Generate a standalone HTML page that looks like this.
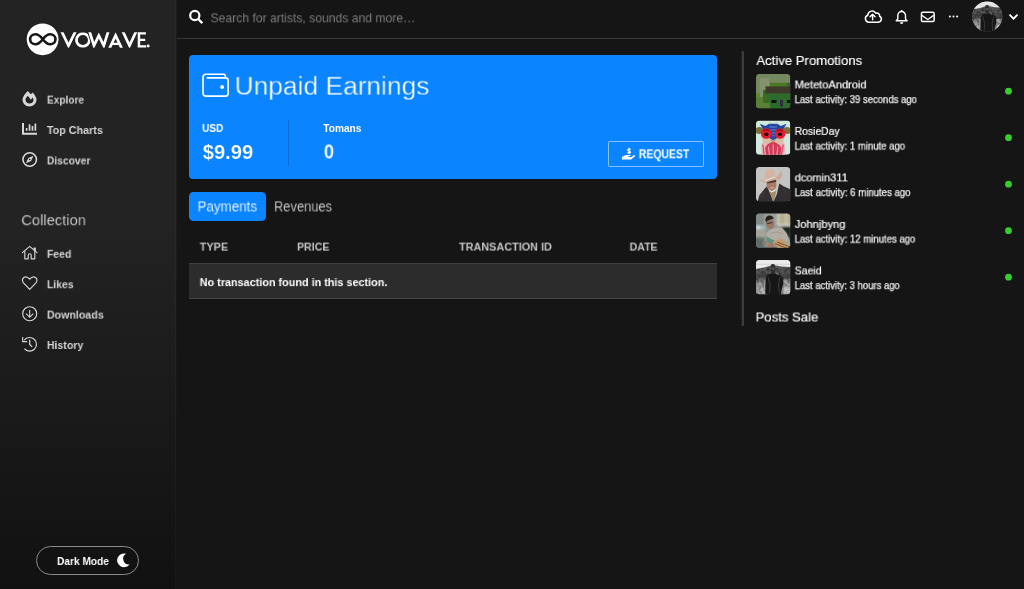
<!DOCTYPE html>
<html>
<head>
<meta charset="utf-8">
<title>Vowave</title>
<style>
*{box-sizing:border-box;margin:0;padding:0}
html,body{width:1024px;height:589px;overflow:hidden;background:#151515;font-family:"Liberation Sans",sans-serif;color:#fff}
.abs{position:absolute}
#side{position:absolute;left:0;top:0;width:176px;height:589px;background:linear-gradient(180deg,#232323 0%,#232323 38%,#111111 100%);border-right:1px solid rgba(255,255,255,.03)}
#side2{position:absolute;left:176px;top:0;width:1px;height:589px;background:linear-gradient(180deg,#232323 0%,#232323 38%,#111111 100%);opacity:.5}
#main{position:absolute;left:177px;top:0;width:847px;height:589px;background:#151515}
.t{position:absolute;white-space:nowrap;line-height:1;transform-origin:0 0;will-change:transform}
svg{position:absolute;overflow:visible}
</style>
</head>
<body>
<div id="side"></div>
<div id="main"></div>
<div id="side2"></div>
<!-- top bar border -->
<div class="abs" style="left:177px;top:38px;width:847px;height:1px;background:#383838"></div>
<!-- blue card -->
<div class="abs" style="left:189.1px;top:54.65px;width:527.6px;height:124.4px;background:#0a84ff;border-radius:4px"></div>
<div class="abs" style="left:287.5px;top:120px;width:1px;height:46px;background:#086ed6"></div>
<!-- request button -->
<div class="abs" style="left:608px;top:141px;width:96px;height:25.5px;border:1px solid rgba(255,255,255,.5);border-radius:1.5px"></div>
<!-- tab -->
<div class="abs" style="left:189.2px;top:191.65px;width:76.8px;height:29.15px;background:#0a84ff;border-radius:4.5px"></div>
<!-- table row -->
<div class="abs" style="left:189px;top:263px;width:528px;height:36px;background:#2c2c2c;border-top:1px solid #414141;border-bottom:1px solid #444"></div>
<!-- right panel border -->
<div class="abs" style="left:742px;top:50.5px;width:2px;height:275.3px;background:#3b3b3b"></div>
<div class="abs" style="left:741px;top:50.5px;width:1px;height:275.3px;background:#202020"></div>
<!-- dark mode pill -->
<div class="abs" style="left:36px;top:546px;width:103px;height:29px;border:1px solid #8a8a8a;border-radius:15px"></div>

<!-- TEXT -->
<div class="t" style="left:210px;top:11px;font-size:13.5px;font-weight:400;color:#7d7d7d;transform:translate(0.50px,0.30px) scale(0.9010,1.0000);">Search for artists, sounds and more…</div>
<div class="t" style="left:234px;top:72px;font-size:26.6px;font-weight:400;color:#fff;transform:translate(0.52px,0.80px) scale(0.9916,1.0000);-webkit-text-stroke:0.35px #0a84ff;">Unpaid Earnings</div>
<div class="t" style="left:202px;top:123px;font-size:10px;font-weight:700;color:#fff;transform:translate(0.20px,0.90px) scale(0.9956,1.0000);">USD</div>
<div class="t" style="left:202px;top:141px;font-size:20px;font-weight:700;color:#fff;transform:translate(0.70px,0.50px) scale(1.0075,1.0000);-webkit-text-stroke:0.2px #0a84ff;">$9.99</div>
<div class="t" style="left:323px;top:123px;font-size:10px;font-weight:700;color:#fff;transform:translate(0.30px,0.90px) scale(1.0148,1.0000);">Tomans</div>
<div class="t" style="left:323px;top:141px;font-size:20px;font-weight:700;color:#fff;transform:translate(0.80px,0.50px) scale(0.9273,1.0000);-webkit-text-stroke:0.2px #0a84ff;">0</div>
<div class="t" style="left:638px;top:148px;font-size:12px;font-weight:700;color:#fff;transform:translate(0.80px,0.30px) scale(0.8692,1.0000);">REQUEST</div>
<div class="t" style="left:197px;top:199px;font-size:14px;font-weight:400;color:#fff;transform:translate(0.54px,0.40px) scale(0.9568,1.0000);-webkit-text-stroke:0.15px #0a84ff;">Payments</div>
<div class="t" style="left:273px;top:199px;font-size:14px;font-weight:400;color:#d6d6d6;transform:translate(0.98px,0.40px) scale(0.9204,1.0000);-webkit-text-stroke:0.15px #151515;">Revenues</div>
<div class="t" style="left:199px;top:241px;font-size:11.8px;font-weight:700;color:#c6c6c6;transform:translate(0.70px,0.60px) scale(0.9211,1.0000);">TYPE</div>
<div class="t" style="left:297px;top:241px;font-size:11.8px;font-weight:700;color:#c6c6c6;transform:translate(0.00px,0.60px) scale(0.8982,1.0000);">PRICE</div>
<div class="t" style="left:459px;top:241px;font-size:11.8px;font-weight:700;color:#c6c6c6;transform:translate(0.00px,0.60px) scale(0.9191,1.0000);">TRANSACTION ID</div>
<div class="t" style="left:629px;top:241px;font-size:11.8px;font-weight:700;color:#c6c6c6;transform:translate(0.60px,0.60px) scale(0.8958,1.0000);">DATE</div>
<div class="t" style="left:199px;top:277px;font-size:11.8px;font-weight:700;color:#fff;transform:translate(0.70px,0.10px) scale(0.9177,1.0000);">No transaction found in this section.</div>
<div class="t" style="left:756px;top:54px;font-size:13.6px;font-weight:400;color:#fff;transform:translate(0.40px,0.00px) scale(0.9649,1.0000);-webkit-text-stroke:0.15px #fff;">Active Promotions</div>
<div class="t" style="left:794px;top:79px;font-size:11.2px;font-weight:400;color:#fff;transform:translate(0.70px,0.40px) scale(0.9870,1.0000);-webkit-text-stroke:0.2px #fff;">MetetoAndroid</div>
<div class="t" style="left:794px;top:95px;font-size:10px;font-weight:400;color:#f0f0f0;transform:translate(0.70px,0.10px) scale(0.9515,1.0000);-webkit-text-stroke:0.25px #f0f0f0;">Last activity: 39 seconds ago</div>
<div class="t" style="left:794px;top:125px;font-size:11.2px;font-weight:400;color:#fff;transform:translate(0.70px,0.90px) scale(0.9243,1.0000);-webkit-text-stroke:0.2px #fff;">RosieDay</div>
<div class="t" style="left:794px;top:141px;font-size:10px;font-weight:400;color:#f0f0f0;transform:translate(0.70px,0.60px) scale(0.9547,1.0000);-webkit-text-stroke:0.25px #f0f0f0;">Last activity: 1 minute ago</div>
<div class="t" style="left:794px;top:172px;font-size:11.2px;font-weight:400;color:#fff;transform:translate(0.70px,0.40px) scale(0.9855,1.0000);-webkit-text-stroke:0.2px #fff;">dcomin311</div>
<div class="t" style="left:794px;top:188px;font-size:10px;font-weight:400;color:#f0f0f0;transform:translate(0.70px,0.10px) scale(0.9599,1.0000);-webkit-text-stroke:0.25px #f0f0f0;">Last activity: 6 minutes ago</div>
<div class="t" style="left:794px;top:218px;font-size:11.2px;font-weight:400;color:#fff;transform:translate(0.70px,0.90px) scale(0.9944,1.0000);-webkit-text-stroke:0.2px #fff;">Johnjbyng</div>
<div class="t" style="left:794px;top:234px;font-size:10px;font-weight:400;color:#f0f0f0;transform:translate(0.70px,0.60px) scale(0.9564,1.0000);-webkit-text-stroke:0.25px #f0f0f0;">Last activity: 12 minutes ago</div>
<div class="t" style="left:794px;top:265px;font-size:11.2px;font-weight:400;color:#fff;transform:translate(0.70px,0.40px) scale(0.9369,1.0000);-webkit-text-stroke:0.2px #fff;">Saeid</div>
<div class="t" style="left:794px;top:281px;font-size:10px;font-weight:400;color:#f0f0f0;transform:translate(0.70px,0.10px) scale(0.9500,1.0000);-webkit-text-stroke:0.25px #f0f0f0;">Last activity: 3 hours ago</div>
<div class="t" style="left:755px;top:310px;font-size:13.6px;font-weight:400;color:#fff;transform:translate(0.54px,0.50px) scale(0.9650,1.0000);-webkit-text-stroke:0.15px #fff;">Posts Sale</div>
<div class="t" style="left:46px;top:93px;font-size:11.6px;font-weight:700;color:#d4d4d4;transform:translate(0.90px,0.60px) scale(0.8752,1.0000);">Explore</div>
<div class="t" style="left:46px;top:124px;font-size:11.6px;font-weight:700;color:#d4d4d4;transform:translate(0.90px,0.00px) scale(0.9268,1.0000);">Top Charts</div>
<div class="t" style="left:46px;top:154px;font-size:11.6px;font-weight:700;color:#d4d4d4;transform:translate(0.90px,0.40px) scale(0.8875,1.0000);">Discover</div>
<div class="t" style="left:21px;top:212px;font-size:15.4px;font-weight:400;color:#dadada;transform:translate(0.30px,0.20px) scale(0.9564,1.0000);-webkit-text-stroke:0.2px #1e1e1e;">Collection</div>
<div class="t" style="left:46px;top:247px;font-size:11.6px;font-weight:700;color:#d4d4d4;transform:translate(0.90px,0.80px) scale(0.9045,1.0000);">Feed</div>
<div class="t" style="left:46px;top:278px;font-size:11.6px;font-weight:700;color:#d4d4d4;transform:translate(0.90px,0.20px) scale(0.9007,1.0000);">Likes</div>
<div class="t" style="left:46px;top:308px;font-size:11.6px;font-weight:700;color:#d4d4d4;transform:translate(0.90px,0.60px) scale(0.9188,1.0000);">Downloads</div>
<div class="t" style="left:46px;top:339px;font-size:11.6px;font-weight:700;color:#d4d4d4;transform:translate(0.90px,0.00px) scale(0.9112,1.0000);">History</div>
<div class="t" style="left:57px;top:556px;font-size:11.8px;font-weight:700;color:#fff;transform:translate(0.00px,0.00px) scale(0.8609,1.0000);">Dark Mode</div>
<!-- ICONS -->
<svg width="1024" height="589" viewBox="0 0 1024 589" style="left:0;top:0" fill="none">
<!-- logo -->
<circle cx="42.6" cy="39.3" r="15.9" fill="#fff"/>
<path d="M42.800 39.200C40.300 35.900 38.300 34.200 35.500 34.200A5.400 5 0 0 0 35.500 44.200C38.300 44.200 40.300 42.500 42.800 39.200C45.300 35.900 47.300 34.200 50.100 34.200A5.400 5 0 0 1 50.100 44.200C47.300 44.200 45.300 42.500 42.800 39.200Z" stroke="#161616" stroke-width="2.600"/>
<clipPath id="capclip"><rect x="58" y="32.3" width="95" height="15.4"/></clipPath>
<g clip-path="url(#capclip)" stroke="#fff" stroke-width="2.7" stroke-linejoin="miter" stroke-miterlimit="10">
<path d="M61.1 30.3L68.5 45.6L76 30.3"/>
<circle cx="82.9" cy="40" r="6.45"/>
<path d="M87.2 30.3L92.3 45.6" stroke="#242424" stroke-width="1.1"/>
<path d="M89.1 30.3L94 45.6L98.800 35.600L103.800 45.600L108.600 30.300"/>
<path d="M109.050 49.400L115.600 35.500L122.150 49.400"/>
<path d="M112 43.900H119.200" stroke-width="2.200"/>
<path d="M122.300 30.300L129.500 45.600L136.700 30.300"/>
</g>
<path d="M137.700 32.300h8.200v2.300h-5.700v4.200h5v2.200h-5v4.200h6.100v2.300h-8.600z" fill="#fff"/>
<circle cx="148.200" cy="46" r="1.400" fill="#fff"/>

<!-- search -->
<circle cx="194.800" cy="15.500" r="4.600" stroke="#fff" stroke-width="2.200"/>
<path d="M198.200 19L202.300 23.100" stroke="#fff" stroke-width="2.400"/>

<!-- explore (fire) -->
<g transform="translate(22.500 91) scale(0.03125 0.0303)">
<path fill="#d8d8d8" fill-rule="evenodd" d="M323.560 51.200c-20.800 19.300-39.580 39.590-56.220 59.970C240.080 73.620 206.280 35.530 168 0 69.740 91.170 0 209.960 0 281.600 0 408.850 100.290 512 224 512s224-103.150 224-230.400c0-53.270-51.980-163.140-124.440-230.400zm-19.470 340.650C282.430 407.010 255.720 416 226.860 416 154.710 416 96 368.260 96 290.750c0-38.610 24.310-72.630 72.790-130.750 6.930 7.980 98.830 125.340 98.830 125.340l58.630-66.880c4.140 6.850 7.910 13.550 11.270 19.970 27.350 52.190 15.810 118.970-33.430 153.420z"/>
</g>

<!-- top charts -->
<g fill="#d8d8d8">
<path d="M22 123.100h2v9.700h13v2H22z"/>
<rect x="25.800" y="127.900" width="1.700" height="2.900" rx=".3"/>
<rect x="28.700" y="124.300" width="1.700" height="6.500" rx=".3"/>
<rect x="31.600" y="125.900" width="1.700" height="4.900" rx=".3"/>
<rect x="34.500" y="123.500" width="1.700" height="7.300" rx=".3"/>
</g>

<!-- discover (compass) -->
<circle cx="29.700" cy="159.500" r="6.750" stroke="#d8d8d8" stroke-width="1.600"/>
<path d="M33.500 155.700L31.100 160.900L25.900 163.300L28.300 158.100z" fill="#d8d8d8"/>
<circle cx="29.700" cy="159.500" r=".8" fill="#222"/>

<!-- feed (home) -->
<g stroke="#d4d4d4" stroke-width="1.150" stroke-linecap="round" stroke-linejoin="round">
<path d="M22.400 252.600L29.700 246.400L37 252.600"/>
<path d="M35.300 250.800V248h-1.200v1.800"/>
<path d="M24.800 251.200V258.800H28.200V255.200a1.500 1.500 0 0 1 3 0V258.800H34.800V251.200"/>
</g>

<!-- likes (heart) -->
<path d="M29.700 289.300L23.700 283.200C21.900 281.300 22.100 278.700 23.800 277.500C25.500 276.300 27.700 276.700 29.700 279.100C31.700 276.700 33.900 276.300 35.600 277.500C37.300 278.700 37.500 281.300 35.700 283.200Z" stroke="#d4d4d4" stroke-width="1.200" stroke-linejoin="round"/>

<!-- downloads -->
<circle cx="29.700" cy="313.700" r="7" stroke="#d4d4d4" stroke-width="1.150"/>
<path d="M29.700 310V317.200M26.100 313.700L29.700 317.300L33.300 313.700" stroke="#d4d4d4" stroke-width="1.150"/>

<!-- history -->
<g stroke="#d4d4d4" stroke-width="1.150">
<path d="M24.300 340.100A6.800 6.800 0 1 1 24.400 348.600"/>
<path d="M22.650 337V341.550H27.200"/>
<path d="M29.700 339.800V344.400L32.200 346.900" stroke-width="1.300"/>
</g>

<!-- moon -->
<path d="M126.200 553.800A6.900 6.900 0 1 0 129.500 564.500A5.700 5.700 0 0 1 126.200 553.800Z" fill="#fff"/>

<!-- wallet -->
<g stroke="#fff" stroke-width="1.600" stroke-linecap="round">
<path d="M207.300 77.900H225.600a2.500 2.500 0 0 1 2.500 2.500V93.400a2.700 2.700 0 0 1 -2.700 2.700H206.200a3.200 3.200 0 0 1 -3.200 -3.200V77.400a3.200 3.200 0 0 1 3.200 -3.200H223.400a2 2 0 0 1 2 2V77.800"/>
</g>
<circle cx="222.100" cy="87" r="1.900" fill="#fff"/>

<!-- request icon (hand holding usd) -->
<path d="M621.900 157L624.200 155.800 625.800 155.100H630.200L630.900 156.100 628.200 156.300V157.100L631.100 157.300 634 155.100 635.200 155.500 635 156.300 631.100 159.500H621.900Z" fill="#fff"/>
<path d="M630.600 149.500C629.700 148.700 627.800 148.800 627.700 150C627.600 151.300 630.700 150.700 630.500 152.200C630.400 153.200 628.500 153.300 627.500 152.500M629.100 147.800V154" stroke="#fff" stroke-width="1.200"/>

<!-- cloud upload -->
<g stroke="#fff" stroke-width="1.500" stroke-linejoin="round" stroke-linecap="round">
<path d="M869 22.200H878.400a3.100 3.100 0 0 0 1.200 -5.900a2.700 2.700 0 0 0 -3.700 -3a4.300 4.300 0 0 0 -8.100 1.900a3.600 3.600 0 0 0 1.200 7z"/>
<path d="M872.600 19.700V14.500M870.100 16.700L872.600 14.200L875.100 16.700" stroke-width="1.400"/>
</g>

<!-- bell -->
<g stroke="#fff" stroke-width="1.400" stroke-linejoin="round">
<path d="M896.200 20.700L897.800 19V15.600a3.850 4.100 0 0 1 7.700 0V19L907.100 20.700Z"/>
<path d="M901.650 11.500V10" stroke-width="1.600"/>
</g>
<path d="M899.900 22.300H903.400A1.750 1.750 0 0 1 899.900 22.300Z" fill="#fff"/>

<!-- envelope -->
<rect x="921.450" y="12.350" width="12.700" height="9.100" rx="1.300" stroke="#fff" stroke-width="1.500"/>
<path d="M921.800 15.200L927.800 19.500L933.800 15.200" stroke="#fff" stroke-width="1.400"/>

<!-- dots -->
<circle cx="949.900" cy="16.600" r="1" fill="#fff"/><circle cx="953.500" cy="16.600" r="1" fill="#fff"/><circle cx="957.100" cy="16.600" r="1" fill="#fff"/>

<!-- chevron -->
<path d="M1009.500 14.700L1013.500 18.700L1017.500 14.700" stroke="#fff" stroke-width="1.800"/>

<!-- green dots -->
<g fill="#38cc30">
<circle cx="1008.500" cy="91.200" r="3.400"/><circle cx="1008.500" cy="137.700" r="3.400"/><circle cx="1008.500" cy="184.200" r="3.400"/><circle cx="1008.500" cy="230.700" r="3.400"/><circle cx="1008.500" cy="277.200" r="3.400"/>
</g>
</svg>

<!-- AVATARS -->
<svg width="1024" height="589" viewBox="0 0 1024 589" style="left:0;top:0">
<defs>
<filter id="b5" x="-10%" y="-10%" width="120%" height="120%"><feGaussianBlur stdDeviation=".55"/></filter>
<filter id="b8" x="-10%" y="-10%" width="120%" height="120%"><feGaussianBlur stdDeviation=".8"/></filter>
<filter id="nz" x="0" y="0" width="100%" height="100%"><feTurbulence type="fractalNoise" baseFrequency=".35" numOctaves="2" seed="4" result="n"/><feColorMatrix in="n" type="matrix" values="0 0 0 0 0  0 0 0 0 0  0 0 0 0 0  2.2 0 0 0 -.8"/></filter>
<clipPath id="rr"><rect x="0" y="0" width="34.300" height="34.300" rx="3.600"/></clipPath>
<clipPath id="cc"><circle cx="17" cy="17" r="17"/></clipPath>
<!-- B/W man photo, 34x34 -->
</defs>

<!-- header avatar -->
<g transform="translate(972.150 1.400) scale(.888)"><g clip-path="url(#cc)"><g>
<rect width="34.300" height="34.300" fill="#707070"/>
<g filter="url(#b8)">
<path d="M-2 15L12 12.500 24 12 37 14V23L-2 23Z" fill="#4a4a4a"/>
<path d="M-2 9.200L8 7.600 14 5.800 20 5.600 26 6.600 37 7.200V14L24 12 12 12.500 -2 15Z" fill="#565656"/>
<path d="M-2 21L8 19 12 23 10 36H-2Z" fill="#8f8f8f"/>
<path d="M37 19L27 20 25 28 24 36H37Z" fill="#a6a6a6"/>
<path d="M-2 27L7 24 11 30 12 36H-2Z" fill="#b8b8b8"/>
<path d="M37 25L29 26 27 36H37Z" fill="#cfcfcf"/>
</g>
<rect y="7" width="34.300" height="27.300" filter="url(#nz)" opacity=".42"/>
<g filter="url(#b5)">
<path d="M-2 -2H37V7.200L26 6.600 20 5.600 14 5.800 8 7.600 -2 9.200Z" fill="#e9e9e9"/>
<path d="M-2 4.300H37" stroke="#d2d2d2" stroke-width="1"/>
</g>
<g filter="url(#b5)">
<path d="M9.300 36L9.500 24 10 17.500 12 14.800 15 13.600 19 13.600 23.600 15 26.600 17.500 27.300 24 25.500 30 24.800 36Z" fill="#151515"/>
<path d="M14.600 5.900a2.300 1.900 0 0 1 4.600 0L19.300 9.500 18.700 12.300 17.500 14.200 15.800 13.800 14.600 11Z" fill="#2e2e2e"/>
<path d="M15.400 7.600H18.600V9.600H15.400Z" fill="#555"/>
<path d="M12 17L14.200 25 13.500 33" stroke="#3d3d3d" stroke-width="1" fill="none"/>
<path d="M24 17L22.500 25 23.300 33" stroke="#3d3d3d" stroke-width="1" fill="none"/>
<path d="M19.600 12.600L22.500 14.800" stroke="#777" stroke-width="1.100"/>
</g></g></g></g>

<!-- 1 MetetoAndroid -->
<g transform="translate(756 74)"><g clip-path="url(#rr)">
<rect width="34.300" height="34.300" fill="#74875f"/>
<g filter="url(#b5)">
<rect x="3.500" y="4" width="9.500" height="19" fill="#82936d"/>
<rect x="-1" y="19" width="5" height="7" fill="#5f8a30"/>
<rect x="-1" y="23" width="16" height="13" fill="#5a8035"/>
<rect x="7" y="16" width="8" height="13" fill="#3b6a28"/>
</g>
<rect x="14" y="8.800" width="17" height="4" fill="#4a7a1f"/>
<rect x="31" y="8.800" width="4" height="4" fill="#3d5a4a"/>
<rect x="14" y="19" width="21" height="16" fill="#2c6b2c"/>
<rect x="9.500" y="12.400" width="26" height="7" fill="#40392a"/>
<rect x="15.500" y="26" width="5" height="3" fill="#0d0f0a"/>
<rect x="31" y="26" width="4" height="3" fill="#0d0f0a"/>
<rect x="24" y="26" width="3" height="6.500" fill="#332a45"/>
</g></g>

<!-- 2 RosieDay -->
<g transform="translate(756 120.500)"><g clip-path="url(#rr)">
<rect width="34.300" height="34.300" fill="#d2e9de"/>
<g filter="url(#b5)">
<path d="M5.500 36L5.200 24 8 19 12 22 17.150 19 22.300 22 26.300 19 29.100 24 28.800 36Z" fill="#e9b9bf"/>
<path d="M10 36L9 27 12 23 17.150 21 22.300 23 25.300 27 24.300 36Z" fill="#d63a58"/>
<path d="M7 24L8 35M25.300 35L27.300 24" stroke="#d9506a" stroke-width="1.400" fill="none"/>
<path d="M12.500 26L13.500 35M17.150 24V35M21.800 26L20.800 35" stroke="#f0c5cc" stroke-width=".8" fill="none"/>
<path d="M4.500 14H29.800L27 21.500 22.500 24 17.150 19.500 11.800 24 7.300 21.500Z" fill="#d8bea6"/>
<path d="M14 19L17.150 22.500 20.300 19Z" fill="#b89a80"/>
<ellipse cx="3.300" cy="10" rx="3.800" ry="3.600" fill="#7c7034"/>
<ellipse cx="31" cy="10" rx="3.800" ry="3.600" fill="#7c7034"/>
<path d="M3.800 3.300L9.500 5.500 13 3.200H21.300L24.800 5.500 30.500 3.300 27.300 9 22.300 12 20.800 17.800 17.150 19.500 13.500 17.800 12 12 7 9Z" fill="#2446a0"/>
<path d="M13.500 6.500H20.800M14.500 9.500H19.800M15.300 12.500H19M15.800 15.300H18.500" stroke="#6a8fdc" stroke-width=".9"/>
<circle cx="10.300" cy="13" r="5.300" fill="#e01a2d"/>
<circle cx="24" cy="13" r="5.300" fill="#e01a2d"/>
<ellipse cx="10.300" cy="13.800" rx="2" ry="1.700" fill="#16040a"/>
<ellipse cx="24" cy="13.800" rx="2" ry="1.700" fill="#16040a"/>
<path d="M7.300 10.300Q10.300 8 13.300 10.300M21 10.300Q24 8 27 10.300" stroke="#7a0a16" stroke-width="1" fill="none"/>
<path d="M14 1.500V4M20.300 1.500V4" stroke="#9fc0a8" stroke-width=".8"/>
</g>
</g></g>

<!-- 3 dcomin311 -->
<g transform="translate(756 167)"><g clip-path="url(#rr)">
<rect width="34.300" height="34.300" fill="#c6c4c2"/>
<g filter="url(#b5)">
<path d="M1.500 35L3.500 28 8.900 21.400 11.300 19 14 26 17.300 35 21 27 23.200 16.400 28 19.500 35 22.500V36H1Z" fill="#302e31"/>
<path d="M5 30L9 24M27 22L31 27" stroke="#3f3c3e" stroke-width="1.200"/>
<path d="M13.200 24.800L15.500 23.500 20.300 24.300 19.300 29 17.500 35 15.200 29.500Z" fill="#a58c69"/>
<ellipse cx="15.500" cy="18" rx="5" ry="6" fill="#a97b69"/>
<path d="M12.300 21.800Q16 26.500 19.500 21.300L18.500 24.500 16 25.600 13.500 24.500Z" fill="#e6e0da"/>
<path d="M14.300 21.300Q16 20.300 17.800 21" stroke="#d8d0c8" stroke-width=".8" fill="none"/>
<path d="M10.800 15.600L20.300 13.800" stroke="#4a3028" stroke-width="1.700"/>
<path d="M8.200 12.800L9.300 5Q11 1.800 14.500 2Q18 2.200 18.900 5L19.800 11 9.500 14.500Z" fill="#d4b3a2"/>
<path d="M2.300 10.200Q5 13 8.500 13.800L19.800 10.200Q23 8.500 24.700 3.500Q26.800 6.500 25.700 10Q24.500 12.500 22.300 13L20.800 12 9.800 15.800Q5 15 2.300 10.200Z" fill="#caa998"/>
<path d="M8.800 13.500L19.300 10.200" stroke="#f3e9e2" stroke-width=".9"/>
</g>
</g></g>

<!-- 4 Johnjbyng -->
<g transform="translate(756 213.500)"><g clip-path="url(#rr)">
<rect width="34.300" height="34.300" fill="#8a948f"/>
<g filter="url(#b8)">
<rect x="-1" y="-1" width="9" height="13" fill="#808a87"/>
<rect x="8" y="-1" width="14" height="13" fill="#9aa09a"/>
<rect x="22" y="-1" width="14" height="12.500" fill="#b9ad8f"/>
<rect x="21.300" y="-1" width="1.800" height="13" fill="#d2d2c6"/>
<rect x="29.500" y="-1" width="1.500" height="12" fill="#cfccba"/>
<rect x="21.500" y="10.800" width="14" height="1.800" fill="#d2d5cf"/>
<rect x="-1" y="12" width="10" height="4" fill="#a7bdbf"/>
<rect x="1" y="12.500" width="3" height="2.500" fill="#e6eeee"/>
<rect x="-1" y="16" width="11" height="8" fill="#a5a598"/>
<rect x="-1" y="24" width="9" height="12" fill="#5f6e69"/>
<path d="M25 13H35V27L30 20Z" fill="#1c2622"/>
</g>
<g filter="url(#b5)">
<path d="M10 27L10.500 19.500 13.500 16.500 20 14 26 14.500 30.500 19.500 33.500 27 30 31 12 30Z" fill="#b3aea3"/>
<path d="M14 20Q20 17 27 20" stroke="#9f9a90" stroke-width="1" fill="none"/>
<ellipse cx="14.300" cy="10.300" rx="4" ry="5" fill="#9c7564"/>
<path d="M9.300 6.500Q9.800 2.300 13.500 2.100Q17.300 2.300 17.800 6L16.300 5.200 11.300 7.300 10.300 9.300Z" fill="#24241d"/>
<path d="M10.800 10.300L16.300 9" stroke="#2a221e" stroke-width=".9"/>
<path d="M10.500 22.500L14 25 18.500 27 17 30 10.500 29Z" fill="#5f9080"/>
<path d="M17.500 28L25 25 35 30V36H22Z" fill="#c49a6c"/>
<path d="M19 30L34 36M21 28.500L34.500 33.500" stroke="#7a5236" stroke-width="1"/>
<path d="M6.800 29Q8 27 10.300 28.500L9.500 31.500 7.300 31.500Z" fill="#a87460"/>
<path d="M11.300 31Q14 28 17.300 29.800L18.300 33.500 12.300 34Z" fill="#a87460"/>
<path d="M28 28L33 27 34.300 31 30 31.500Z" fill="#9faba0"/>
</g>
</g></g>

<!-- 5 Saeid -->
<g transform="translate(756 260)"><g clip-path="url(#rr)"><g>
<rect width="34.300" height="34.300" fill="#707070"/>
<g filter="url(#b8)">
<path d="M-2 15L12 12.500 24 12 37 14V23L-2 23Z" fill="#4a4a4a"/>
<path d="M-2 9.200L8 7.600 14 5.800 20 5.600 26 6.600 37 7.200V14L24 12 12 12.500 -2 15Z" fill="#565656"/>
<path d="M-2 21L8 19 12 23 10 36H-2Z" fill="#8f8f8f"/>
<path d="M37 19L27 20 25 28 24 36H37Z" fill="#a6a6a6"/>
<path d="M-2 27L7 24 11 30 12 36H-2Z" fill="#b8b8b8"/>
<path d="M37 25L29 26 27 36H37Z" fill="#cfcfcf"/>
</g>
<rect y="7" width="34.300" height="27.300" filter="url(#nz)" opacity=".42"/>
<g filter="url(#b5)">
<path d="M-2 -2H37V7.200L26 6.600 20 5.600 14 5.800 8 7.600 -2 9.200Z" fill="#e9e9e9"/>
<path d="M-2 4.300H37" stroke="#d2d2d2" stroke-width="1"/>
</g>
<g filter="url(#b5)">
<path d="M9.300 36L9.500 24 10 17.500 12 14.800 15 13.600 19 13.600 23.600 15 26.600 17.500 27.300 24 25.500 30 24.800 36Z" fill="#151515"/>
<path d="M14.600 5.900a2.300 1.900 0 0 1 4.600 0L19.300 9.500 18.700 12.300 17.500 14.200 15.800 13.800 14.600 11Z" fill="#2e2e2e"/>
<path d="M15.400 7.600H18.600V9.600H15.400Z" fill="#555"/>
<path d="M12 17L14.200 25 13.500 33" stroke="#3d3d3d" stroke-width="1" fill="none"/>
<path d="M24 17L22.500 25 23.300 33" stroke="#3d3d3d" stroke-width="1" fill="none"/>
<path d="M19.600 12.600L22.500 14.800" stroke="#777" stroke-width="1.100"/>
</g></g></g></g>
</svg>

</body>
</html>
